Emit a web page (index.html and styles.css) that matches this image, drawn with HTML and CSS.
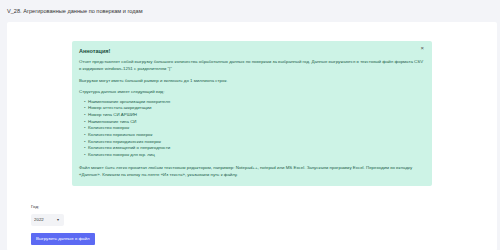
FILE: index.html
```
<!DOCTYPE html>
<html lang="ru">
<head>
  <meta charset="UTF-8" />
  <meta name="viewport" content="width=device-width, initial-scale=1.0"/>
  <title>V_28. Агрегированные данные по поверкам и годам</title>
  <link rel="stylesheet" href="styles.css">
</head>
<body>
  <h1 class="page-title">V_28. Агрегированные данные по поверкам и годам</h1>

  <div class="card">
    <div class="alert">
      <button class="alert-close" type="button">×</button>
      <h4 class="alert-title">Аннотация!</h4>
      <p class="lead">Отчет представляет собой выгрузку большого количества обработанных данных по поверкам за выбранный год. Данные выгружаются в текстовый файл формата CSV в кодировке windows-1251 с разделителем "|"</p>
      <p>Выгрузки могут иметь большой размер и включать до 1 миллиона строк.</p>
      <p>Структура данных имеет следующий вид:</p>
      <ul class="fields">
        <li>Наименование организации поверителя</li>
        <li>Номер аттестата аккредитации</li>
        <li>Номер типа СИ АРШИН</li>
        <li>Наименование типа СИ</li>
        <li>Количество поверок</li>
        <li>Количество первичных поверок</li>
        <li>Количество периодических поверок</li>
        <li>Количество извещений о непригодности</li>
        <li>Количество поверок для юр. лиц</li>
      </ul>
      <p>Файл может быть легко прочитан любым текстовым редактором, например: Notepad++, notepad или MS Excel. Запускаем программу Excel. Переходим во вкладку «Данные». Кликаем на кнопку на ленте «Из текста», указываем путь к файлу.</p>
    </div>

    <form class="export-form">
      <label class="field-label" for="year">Год:</label>
      <div class="select-wrap">
        <select id="year">
          <option>2022</option>
          <option>2021</option>
          <option>2020</option>
        </select>
        <span class="select-arrow">▾</span>
      </div>
      <button class="btn" type="button">Выгрузить данные в файл</button>
    </form>
  </div>
</body>
</html>
```

FILE: styles.css
```
body {
  margin: 0;
  background: #f3f4f8;
  font-family: "Liberation Sans", Arial, sans-serif;
  color: #333;
}

.page-title {
  margin: 0 0 7px;
  padding: 8px 7px 0;
  font-size: 5.6px;
  line-height: 7px;
  font-weight: normal;
  color: #333;
}

.card {
  margin: 0 3px 0 7px;
  padding: 19px 24px 6px;
  background: #fff;
  border-radius: 2px;
}

.alert {
  position: relative;
  width: 360px;
  margin: 0 auto;
  padding: 7px 4px 8px 7px;
  box-sizing: border-box;
  background: #cdf3e6;
  color: #1d5e4b;
  border-radius: 2px;
  font-size: 4.4px;
  line-height: 7px;
}

.alert-close {
  position: absolute;
  top: 4px;
  right: 8px;
  padding: 0;
  border: none;
  background: none;
  color: #555;
  font-size: 6px;
  line-height: 6px;
  cursor: pointer;
}

.alert-title {
  margin: 0 0 3px;
  font-size: 5.5px;
  line-height: 7px;
  font-weight: bold;
  color: #174d3d;
}

.alert p {
  margin: 0 0 4.5px;
}

.alert .lead {
  padding-right: 3px;
}

.fields {
  margin: -0.8px 0 5px;
  padding-left: 5px;
  list-style: none;
}

.fields li {
  line-height: 6.67px;
}

.fields li::before {
  content: "•";
  display: inline-block;
  width: 4px;
}

.alert p:last-child {
  margin-bottom: 0;
}

.export-form {
  margin-top: 18px;
}

.field-label {
  display: block;
  font-size: 4.4px;
  line-height: 6px;
  color: #333;
}

.select-wrap {
  position: relative;
  width: 33px;
  margin-top: 4px;
}

.select-wrap select {
  appearance: none;
  -webkit-appearance: none;
  display: block;
  width: 100%;
  height: 12px;
  padding: 0 3px;
  border: none;
  border-radius: 2px;
  background: #f2f3f6;
  color: #333;
  font-family: inherit;
  font-size: 4.4px;
}

.select-arrow {
  position: absolute;
  top: 0;
  right: 5px;
  font-size: 4.4px;
  line-height: 12px;
  color: #444;
  pointer-events: none;
}

.btn {
  display: block;
  height: 12px;
  margin-top: 7px;
  padding: 0 5px;
  border: none;
  border-radius: 1px;
  background: #5c6af3;
  color: #fff;
  font-family: inherit;
  font-size: 4.4px;
  cursor: pointer;
}
```
